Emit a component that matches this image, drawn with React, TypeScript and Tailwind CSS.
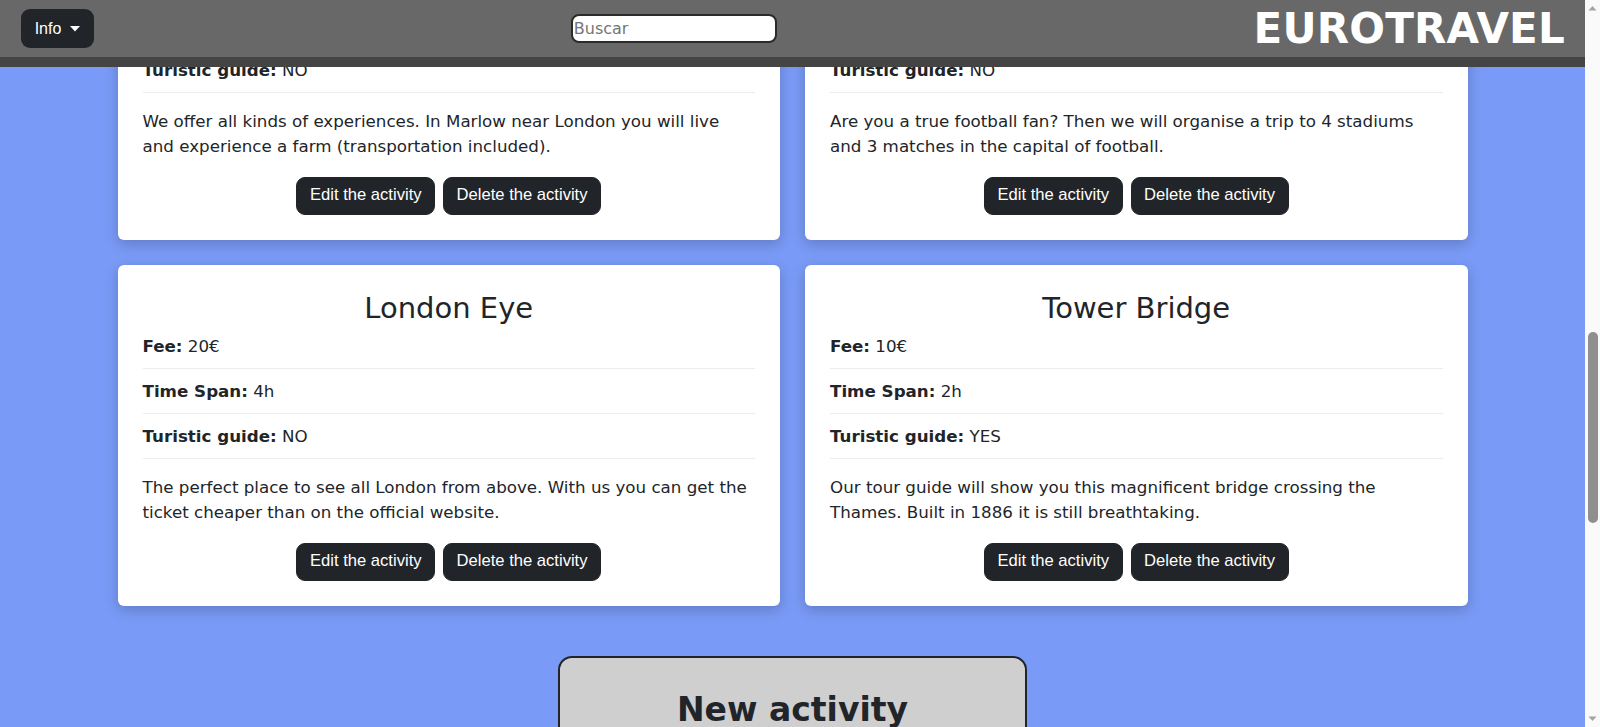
import React from "react";

type Activity = {
  title: string;
  fee: string;
  span: string;
  guide: string;
  text: string;
};

const activities: Activity[] = [
  {
    title: "Farm Experience",
    fee: "15€",
    span: "8h",
    guide: "NO",
    text: "We offer all kinds of experiences. In Marlow near London you will live and experience a farm (transportation included).",
  },
  {
    title: "Football Tour",
    fee: "250€",
    span: "3 days",
    guide: "NO",
    text: "Are you a true football fan? Then we will organise a trip to 4 stadiums and 3 matches in the capital of football.",
  },
  {
    title: "London Eye",
    fee: "20€",
    span: "4h",
    guide: "NO",
    text: "The perfect place to see all London from above. With us you can get the ticket cheaper than on the official website.",
  },
  {
    title: "Tower Bridge",
    fee: "10€",
    span: "2h",
    guide: "YES",
    text: "Our tour guide will show you this magnificent bridge crossing the Thames. Built in 1886 it is still breathtaking.",
  },
];

function Row({ label, value }: { label: string; value: string }) {
  return (
    <div className="py-[10px] leading-6 border-b border-[#ececec]">
      <span className="font-bold">{label}:</span> {value}
    </div>
  );
}

function ActivityCard({ a }: { a: Activity }) {
  return (
    <div className="bg-white rounded-[6px] px-[25px] pt-[27px] pb-[25.5px] shadow-[0_4px_14px_rgba(0,0,0,0.2)] text-[#212529] text-[16.7px]">
      <h3 className="text-center text-[29px] leading-[32px]">{a.title}</h3>
      <Row label="Fee" value={a.fee} />
      <Row label="Time Span" value={a.span} />
      <Row label="Turistic guide" value={a.guide} />
      <p className="pt-[16px] leading-[24.5px]">{a.text}</p>
      <div className="flex justify-center gap-2 mt-[18.5px] font-['Liberation_Sans',Arial,sans-serif]">
        <button className="h-[38px] px-[12.5px] rounded-[9px] border border-[#212529] bg-[#212529] text-white text-[16.6px]">
          Edit the activity
        </button>
        <button className="h-[38px] px-[12.5px] rounded-[9px] border border-[#212529] bg-[#212529] text-white text-[16.6px]">
          Delete the activity
        </button>
      </div>
    </div>
  );
}

function Scrollbar() {
  return (
    <div className="w-[15px] h-full bg-[#fafafa] flex flex-col items-center">
      <svg width="9" height="6" viewBox="0 0 9 6" className="mt-[5px]">
        <path d="M0.5 5.5 L4.5 1 L8.5 5.5 Z" fill="#a3a3a3" />
      </svg>
      <div className="mt-[321px] w-[10px] h-[191px] rounded-full bg-[#8f8f8f]" />
      <div className="flex-1" />
      <svg width="9" height="6" viewBox="0 0 9 6" className="mb-[5px]">
        <path d="M0.5 0.5 L4.5 5 L8.5 0.5 Z" fill="#a3a3a3" />
      </svg>
    </div>
  );
}

export default function App() {
  return (
    <div className="flex w-full h-[727px] overflow-hidden font-['DejaVu_Sans',Verdana,sans-serif]">
      <div className="relative flex-1 h-full overflow-hidden bg-[#799af6]">
        <header className="absolute top-0 left-0 right-0 z-10 h-[67px] bg-[#686868] border-b-[10px] border-[#444] flex items-center justify-between pl-[21px] pr-[20px]">
          <button className="h-[39px] w-[73px] rounded-[9px] bg-[#212529] text-white text-[16px] flex items-center justify-center gap-[9px] font-['Liberation_Sans',Arial,sans-serif]">
            <span>Info</span>
            <svg width="10" height="6" viewBox="0 0 10 6">
              <path d="M0 0 L10 0 L5 5.5 Z" fill="white" />
            </svg>
          </button>
          <input
            placeholder="Buscar"
            className="w-[206px] h-[29px] rounded-[8px] border-2 border-[#2b2b2b] bg-white px-[1px] text-[16px] placeholder:text-[#757575] outline-none"
          />
          <div className="text-white font-bold text-[42px] leading-none tracking-[0.2px]">
            EUROTRAVEL
          </div>
        </header>

        <main className="flex flex-col items-center">
          <div className="-mt-[101px] w-[1350px] grid grid-cols-2 gap-[25px]">
            {activities.map((a) => (
              <ActivityCard key={a.title} a={a} />
            ))}
          </div>

          <div className="mt-[50px] w-[469px] h-[120px] rounded-[14px] border-2 border-[#212529] bg-[#cfcfcf] pt-[32px] text-center">
            <h2 className="font-bold text-[33px] leading-[40px] text-[#212529]">
              New activity
            </h2>
          </div>
        </main>
      </div>
      <Scrollbar />
    </div>
  );
}
